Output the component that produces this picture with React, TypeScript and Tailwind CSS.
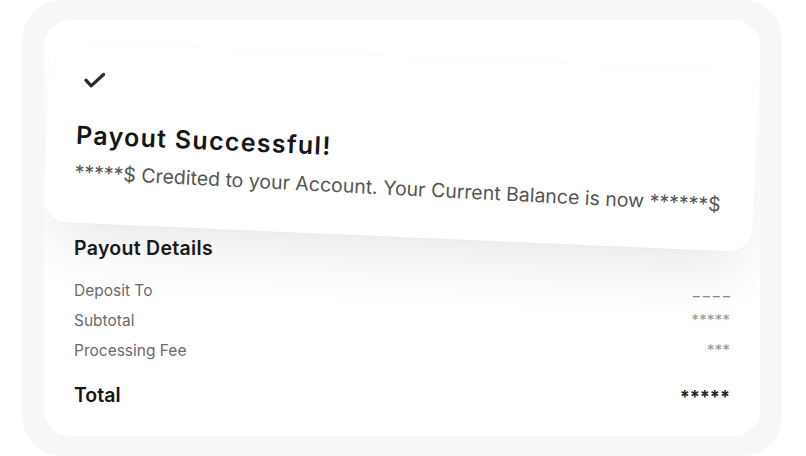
import React from "react";

function CheckIcon() {
  return (
    <svg width="26" height="26" viewBox="0 0 24 24" fill="none" stroke="#2b2b2b" strokeWidth="3" strokeLinecap="round" strokeLinejoin="round">
      <path d="M20 6 9 17l-5-5" />
    </svg>
  );
}

const rows = [
  { label: "Deposit To", value: "____", cls: "tracking-[3px] mr-[-3px] text-[#8a8a8a]" },
  { label: "Subtotal", value: "*****", cls: "text-[#9a9a9a]" },
  { label: "Processing Fee", value: "***", cls: "text-[#9a9a9a]" },
];

export default function App() {
  return (
    <div className="w-[806px] h-[456px] bg-white overflow-hidden" style={{ fontFamily: "Inter, 'Noto Sans', sans-serif" }}>
      <div className="ml-[22px] w-[760px] h-[456px] rounded-[40px] bg-[#f6f7f7] px-[22px] py-[20px]">
        <div className="w-[716px] h-[416px] rounded-[26px] bg-white pt-[37px] overflow-hidden">
          <div className="ml-[2px] w-[710px] h-[180px] rotate-[2.5deg] rounded-[24px] bg-white shadow-[0_32px_56px_-12px_rgba(0,0,0,0.09),0_0_3px_rgba(0,0,0,0.03)] px-[30px] pt-[24px]">
            <div className="ml-[3px]">
              <CheckIcon />
            </div>
            <div className="mt-[26px] text-[25px] leading-[32px] font-semibold text-[#161616] tracking-[1.3px]">
              Payout Successful!
            </div>
            <div className="mt-[9px] text-[19.5px] leading-[24px] text-[#555555] origin-left rotate-[0.4deg]">
              *****$ Credited to your Account. Your Current Balance is now ******$
            </div>
          </div>
          <div className="px-[30px] mt-[-1px]">
            <div className="text-[19.5px] leading-[24px] font-semibold text-[#1a1a1a] tracking-[0.3px]">Payout Details</div>
            <div className="mt-[16px]">
              {rows.map((r) => (
                <div key={r.label} className="h-[30px] flex items-center justify-between text-[15.5px]">
                  <span className="text-[#6b6b6b]">{r.label}</span>
                  <span className={r.cls}>{r.value}</span>
                </div>
              ))}
            </div>
            <div className="mt-[18px] h-[24px] flex items-center justify-between text-[19.5px] font-semibold text-[#141414]">
              <span>Total</span>
              <span className="font-bold text-[18px] text-[#262626]">*****</span>
            </div>
          </div>
        </div>
      </div>
    </div>
  );
}
